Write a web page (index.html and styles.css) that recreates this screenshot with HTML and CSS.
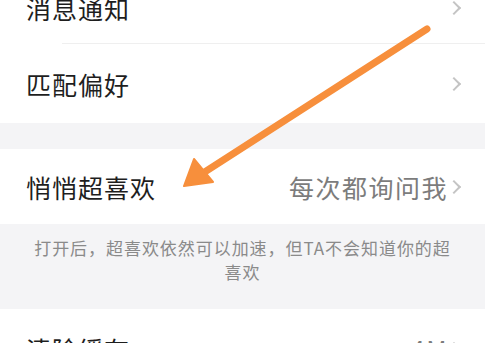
FILE: index.html
```html
<!DOCTYPE html>
<html lang="zh-CN">
<head>
    <meta charset="UTF-8">
    <meta name="viewport" content="width=device-width, initial-scale=1.0">
    <title>设置</title>
    <link rel="stylesheet" href="styles.css">
</head>
<body>
    <div class="page">
        <div class="group">
            <div class="row row-first">
                <span class="row-title">消息通知</span>
                <span class="chevron"></span>
            </div>
            <div class="divider"></div>
            <div class="row">
                <span class="row-title">匹配偏好</span>
                <span class="chevron"></span>
            </div>
        </div>

        <div class="gap"></div>

        <div class="group">
            <div class="row row-short">
                <span class="row-title">悄悄超喜欢</span>
                <span class="row-value">每次都询问我</span>
                <span class="chevron"></span>
            </div>
        </div>

        <p class="tip">打开后，超喜欢依然可以加速，但TA不会知道你的超喜欢</p>

        <div class="group">
            <div class="row">
                <span class="row-title">清除缓存</span>
                <span class="row-value">4M</span>
                <span class="chevron"></span>
            </div>
        </div>

        <!-- 标注箭头 -->
        <svg class="arrow" width="485" height="343" viewBox="0 0 485 343">
            <line x1="427" y1="29" x2="200" y2="175" stroke="#f78f3c" stroke-width="7" stroke-linecap="round"/>
            <polygon points="184,186 194,159 213,182" fill="#f78f3c" stroke="#f78f3c" stroke-width="2" stroke-linejoin="round"/>
        </svg>
    </div>
</body>
</html>
```

FILE: styles.css
```css
body {
    margin: 0;
    padding: 0;
    background-color: #f4f4f6;
    font-family: "Noto Sans CJK SC", "Noto Sans", sans-serif;
    color: #222;
}
.page {
    position: relative;
    width: 485px;
    height: 343px;
    overflow: hidden;
}
.group {
    background-color: #fff;
}
.row {
    display: flex;
    align-items: center;
    height: 79px;
    padding: 0 22px 0 26px;
}
.row-first {
    height: 70px;
    margin-top: -27px;
}
.row-short {
    height: 75px;
}
.row-title {
    flex-grow: 1;
    font-size: 25px;
    letter-spacing: 1px;
    color: #1e1e1e;
}
.row-value {
    font-size: 25px;
    letter-spacing: 1.5px;
    color: #7c7c7c;
}
.chevron {
    width: 8px;
    height: 8px;
    border-top: 2px solid #c4c4c4;
    border-right: 2px solid #c4c4c4;
    transform: rotate(45deg);
    margin-left: 1px;
    margin-right: 4px;
}
.divider {
    height: 1px;
    margin-left: 62px;
    background-color: #efefef;
}
.gap {
    height: 26px;
}
.tip {
    margin: 0;
    padding: 12px 30px 25px;
    text-align: center;
    font-size: 17px;
    line-height: 24px;
    letter-spacing: 0.95px;
    color: #8a8a8a;
}
.arrow {
    position: absolute;
    top: 0;
    left: 0;
}
```
